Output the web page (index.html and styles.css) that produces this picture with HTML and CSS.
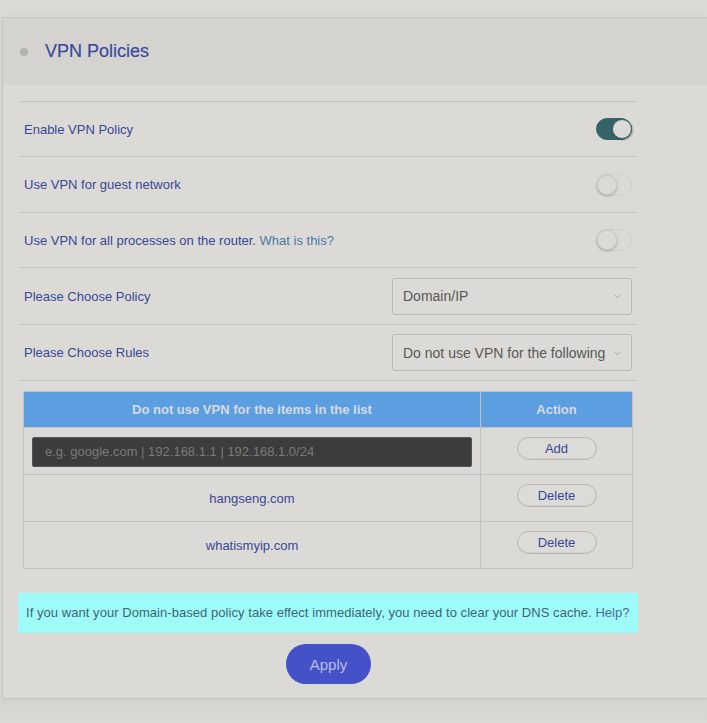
FILE: index.html
```html
<!DOCTYPE html>
<html>
<head>
<meta charset="utf-8">
<link rel="stylesheet" href="styles.css">
</head>
<body>
<div class="page">
  <div class="card">
    <div class="card-header">
      <span class="dot"></span>
      <h1 class="title">VPN Policies</h1>
    </div>
    <div class="card-body">
      <div class="rows">
        <div class="row">
          <span class="label">Enable VPN Policy</span>
          <span class="toggle on"><span class="knob"></span></span>
        </div>
        <div class="row row-b">
          <span class="label">Use VPN for guest network</span>
          <span class="toggle"><span class="knob"></span></span>
        </div>
        <div class="row">
          <span class="label">Use VPN for all processes on the router. <a class="link">What is this?</a></span>
          <span class="toggle"><span class="knob"></span></span>
        </div>
        <div class="row row-select">
          <span class="label">Please Choose Policy</span>
          <div class="select"><span>Domain/IP</span><svg class="chev" width="7" height="5" viewBox="0 0 7 5"><path d="M0.5 0.8 L3.5 3.8 L6.5 0.8" fill="none" stroke="#a9a8a4" stroke-width="1"/></svg></div>
        </div>
        <div class="row row-select row-b">
          <span class="label">Please Choose Rules</span>
          <div class="select"><span>Do not use VPN for the following</span><svg class="chev" width="7" height="5" viewBox="0 0 7 5"><path d="M0.5 0.8 L3.5 3.8 L6.5 0.8" fill="none" stroke="#a9a8a4" stroke-width="1"/></svg></div>
        </div>
      </div>

      <table class="list">
        <thead>
          <tr><th class="c1">Do not use VPN for the items in the list</th><th class="c2">Action</th></tr>
        </thead>
        <tbody>
          <tr><td class="c1"><input class="entry" type="text" placeholder="e.g. google.com | 192.168.1.1 | 192.168.1.0/24"></td><td class="c2"><button class="pill">Add</button></td></tr>
          <tr><td class="c1 item">hangseng.com</td><td class="c2"><button class="pill">Delete</button></td></tr>
          <tr><td class="c1 item">whatismyip.com</td><td class="c2"><button class="pill">Delete</button></td></tr>
        </tbody>
      </table>

      <div class="notice">If you want your Domain-based policy take effect immediately, you need to clear your DNS cache. <a class="help">Help?</a></div>

      <div class="actions"><button class="apply">Apply</button></div>
    </div>
  </div>
</div>
</body>
</html>
```

FILE: styles.css
```css
html, body {
  margin: 0;
  padding: 0;
  background: #dbd9d5;
  overflow: hidden;
}
body {
  font-family: "Liberation Sans", Arial, sans-serif;
  font-size: 13px;
  color: #3a4796;
}
.page {
  padding-top: 17px;
  padding-left: 2px;
  height: 723px;
  box-sizing: border-box;
  background: linear-gradient(#dbd9d5 0, #dbd9d5 698px, #d6d5d1 706px, #dbd9d5 723px);
}
.card {
  border: 1px solid #c4c3bf;
  border-right: none;
  border-radius: 3px 0 0 3px;
  background: #dbdad6;
  box-shadow: 0 2px 6px rgba(0,0,0,0.06);
}
.card-header {
  height: 67px;
  background: #d4d3cf;
  display: flex;
  align-items: center;
  padding-left: 17px;
}
.dot {
  width: 8px;
  height: 8px;
  border-radius: 50%;
  background: #b3b2ae;
  margin-right: 17px;
  margin-top: 1px;
}
.title {
  margin: 0;
  font-size: 18px;
  font-weight: normal;
  color: #3a4a9e;
  -webkit-text-stroke: 0.2px #3a4a9e;
}
.card-body {
  padding: 16px 0 14px 17px;
  width: 617px;
}
.rows {
  border-bottom: 1px solid #c3c2be;
}
.row {
  border-top: 1px solid #c3c2be;
  height: 54px;
  display: flex;
  align-items: center;
  justify-content: space-between;
  padding: 0 5px 0 4px;
}
.row.row-b {
  height: 55px;
}
.row.row-select {
  height: 56px;
}
.row.row-select.row-b {
  height: 55px;
}
.label {
  color: #3a4796;
}
.link {
  color: #4a78a8;
}
.toggle {
  position: relative;
  width: 36px;
  height: 22px;
  border-radius: 11px;
  box-sizing: border-box;
  border: 1px solid #d0cfcb;
  display: inline-block;
}
.toggle .knob {
  position: absolute;
  top: 0;
  left: 0;
  width: 20px;
  height: 20px;
  border-radius: 50%;
  background: #dbdad6;
  box-shadow: 0 1px 3px rgba(0,0,0,0.25);
  border: 1px solid #cfcecb;
  box-sizing: border-box;
}
.toggle.on {
  background: #346466;
  border-color: #346466;
}
.toggle.on .knob {
  left: auto;
  right: -1px;
  border-color: #346466;
  box-shadow: 1px 1px 2px rgba(0,0,0,0.3);
}
.select {
  width: 240px;
  height: 37px;
  box-sizing: border-box;
  border: 1px solid #b9b8b4;
  border-radius: 3px;
  display: flex;
  align-items: center;
  justify-content: space-between;
  padding: 0 10px;
  font-size: 14px;
  color: #585858;
}
.chev {
  margin-top: 1px;
}
.list {
  margin: 10px 0 0 3px;
  width: 610px;
  border-collapse: collapse;
  table-layout: fixed;
}
.list th, .list td {
  border: 1px solid #c3c2be;
  padding: 0;
  text-align: center;
}
.list th {
  background: #5c9fe0;
  color: #d7dae6;
  font-weight: bold;
  height: 35px;
  font-size: 13px;
}
.list th.c1 { width: 456px; }
.list td {
  height: 46px;
}
.list td.c1 {
  padding: 0 8px;
}
.item {
  color: #3a4796;
}
.entry {
  width: 100%;
  height: 30px;
  box-sizing: border-box;
  background: #3c3c3c;
  border: 1px solid #555;
  border-radius: 2px;
  color: #ddd;
  font-family: "Liberation Sans", Arial, sans-serif;
  font-size: 13px;
  padding: 0 12px;
  display: block;
  margin-top: 1px;
}
.entry::placeholder {
  color: #7a7a7a;
}
.pill {
  width: 80px;
  height: 23px;
  border-radius: 12px;
  border: 1px solid #b7b6b2;
  background: #dcdbd7;
  box-shadow: inset 0 -1px 1px rgba(0,0,0,0.06);
  font-family: "Liberation Sans", Arial, sans-serif;
  font-size: 13px;
  color: #3a4796;
  padding: 0;
  margin-bottom: 6px;
}
.notice {
  margin: 24px 0 0 -2px;
  width: 620px;
  height: 40px;
  line-height: 40px;
  box-sizing: border-box;
  background: #9ffbf8;
  border-radius: 2px;
  padding: 0 8px;
  white-space: nowrap;
  color: #3d6577;
  font-size: 13px;
  letter-spacing: 0.05px;
}
.help {
  color: #4a6aa8;
}
.actions {
  display: flex;
  justify-content: center;
  margin-top: 11px;
}
.apply {
  width: 85px;
  height: 40px;
  border-radius: 20px;
  border: none;
  background: #4451c9;
  color: #b9bdea;
  font-family: "Liberation Sans", Arial, sans-serif;
  font-size: 15px;
}
```
